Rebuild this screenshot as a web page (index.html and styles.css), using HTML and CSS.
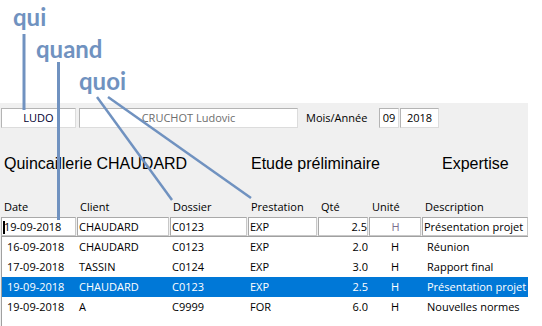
FILE: index.html
```html
<!DOCTYPE html>
<html lang="fr">
<head>
    <meta charset="UTF-8">
    <title>Saisie des prestations</title>
    <link rel="stylesheet" href="styles.css">
</head>
<body>
    <div class="notes">
        <div class="note-qui">qui</div>
        <div class="note-quand">quand</div>
        <div class="note-quoi">quoi</div>
    </div>

    <div class="panel">
        <div class="fields">
            <div class="box user">LUDO</div>
            <div class="box name">CRUCHOT Ludovic</div>
            <div class="label">Mois/Année</div>
            <div class="box month">09</div>
            <div class="box year">2018</div>
        </div>

        <div class="titles">
            <span class="t-client">Quincaillerie CHAUDARD</span>
            <span class="t-dossier">Etude préliminaire</span>
            <span class="t-presta">Expertise</span>
        </div>

        <div class="cols">
            <span>Date</span>
            <span>Client</span>
            <span>Dossier</span>
            <span>Prestation</span>
            <span>Qté</span>
            <span>Unité</span>
            <span>Description</span>
        </div>

        <div class="edit">
            <span class="c-date"><i class="caret"></i>19-09-2018</span>
            <span>CHAUDARD</span>
            <span>C0123</span>
            <span>EXP</span>
            <span class="c-qty">2.5</span>
            <span class="c-unit">H</span>
            <span class="c-desc">Présentation projet</span>
        </div>

        <div class="list">
            <div class="row">
                <span class="c-date">16-09-2018</span><span>CHAUDARD</span><span>C0123</span><span>EXP</span>
                <span class="c-qty">2.0</span><span class="c-unit">H</span><span class="c-desc">Réunion</span>
            </div>
            <div class="row">
                <span class="c-date">17-09-2018</span><span>TASSIN</span><span>C0124</span><span>EXP</span>
                <span class="c-qty">3.0</span><span class="c-unit">H</span><span class="c-desc">Rapport final</span>
            </div>
            <div class="row selected">
                <span class="c-date">19-09-2018</span><span>CHAUDARD</span><span>C0123</span><span>EXP</span>
                <span class="c-qty">2.5</span><span class="c-unit">H</span><span class="c-desc">Présentation projet</span>
            </div>
            <div class="row">
                <span class="c-date">19-09-2018</span><span>A</span><span>C9999</span><span>FOR</span>
                <span class="c-qty">6.0</span><span class="c-unit">H</span><span class="c-desc">Nouvelles normes</span>
            </div>
        </div>
    </div>

    <!-- traits d'annotation -->
    <svg class="arrows" width="542" height="326" viewBox="0 0 542 326">
        <g stroke="#7092c0" fill="none">
            <line x1="24" y1="34" x2="24" y2="110" stroke-width="3"/>
            <line x1="58.5" y1="62" x2="58.5" y2="220" stroke-width="3"/>
            <line x1="97" y1="97" x2="172" y2="200" stroke-width="2.5"/>
            <line x1="108" y1="97" x2="251" y2="198" stroke-width="2.5"/>
        </g>
    </svg>
</body>
</html>
```

FILE: styles.css
```css
* {
    margin: 0;
    padding: 0;
    box-sizing: border-box;
}

body {
    position: relative;
    width: 542px;
    height: 326px;
    overflow: hidden;
    background: #ffffff;
    font-family: "Open Sans", "Noto Sans", sans-serif;
    font-size: 11px;
    color: #000;
}

/* annotations */
.notes {
    height: 103px;
    padding-top: 1px;
    font-family: Lato, "Open Sans", sans-serif;
    font-weight: bold;
    font-size: 24px;
    line-height: 32px;
    color: #7092c0;
}

.note-qui { margin-left: 13px; }
.note-quand { margin-left: 36px; }
.note-quoi { margin-left: 79px; }

.arrows {
    position: absolute;
    top: 0;
    left: 0;
    pointer-events: none;
}

/* formulaire */
.panel {
    width: 528px;
    height: 223px;
    padding-top: 5px;
    background: #f0f0f0;
}

.fields {
    display: flex;
    height: 20px;
}

.box {
    background: #fff;
    border: 1px solid;
    border-color: #b4b4b4 #dcdcdc #dcdcdc #b4b4b4;
    line-height: 18px;
    text-align: center;
    white-space: nowrap;
}

.user {
    width: 75px;
    margin-left: 1px;
    color: #000030;
}

.name {
    width: 219px;
    margin-left: 3px;
    color: #6d6d6d;
}

.label {
    width: 73px;
    margin-left: 8px;
    line-height: 19px;
}

.month { width: 20px; }

.year {
    width: 39px;
    margin-left: 1px;
}

.titles {
    display: flex;
    margin-top: 27px;
    padding-left: 4px;
    font-family: "Liberation Sans", Arial, sans-serif;
    font-size: 16px;
    line-height: 18px;
}

.t-client { width: 247px; }
.t-dossier { width: 191px; }

/* grille */
.cols,
.edit {
    display: grid;
    grid-template-columns: 75px 92px 77px 69px 50px 52px 106px;
    column-gap: 1px;
    padding-left: 1px;
}

.cols {
    margin-top: 26px;
    line-height: 15px;
}

.cols span { padding-left: 3px; }

.edit {
    margin-top: 3px;
    height: 19px;
}

.edit span {
    background: #fff;
    border: 1px solid;
    border-color: #a9a9a9 #c8c8c8 #c8c8c8 #a9a9a9;
    padding: 0 0 0 1px;
    line-height: 17px;
    white-space: nowrap;
    overflow: hidden;
}

.edit .c-date { padding-left: 1px; }

.caret {
    display: inline-block;
    width: 2px;
    height: 13px;
    margin-right: -1px;
    vertical-align: -3px;
    background: #000;
}

.edit .c-qty {
    text-align: right;
    padding: 0;
}

.edit .c-unit {
    text-align: center;
    color: #7a6f8f;
}

.list {
    height: 90px;
    margin-left: 1px;
    border-left: 1px solid #a0a0a0;
    border-top: 1px solid #a0a0a0;
    background: #fff;
}

.row {
    display: grid;
    grid-template-columns: 74px 92px 77px 69px 50px 52px 106px;
    column-gap: 1px;
    height: 20px;
    line-height: 20px;
}

.row span {
    padding-left: 2px;
    white-space: nowrap;
    overflow: hidden;
}

.row .c-date { padding-left: 5px; }

.row .c-qty {
    text-align: right;
    padding: 0;
}

.row .c-unit {
    text-align: center;
    padding: 0;
}

.row .c-desc { padding-left: 5px; }

.row.selected {
    background: #0078d7;
    color: #fff;
}
```
